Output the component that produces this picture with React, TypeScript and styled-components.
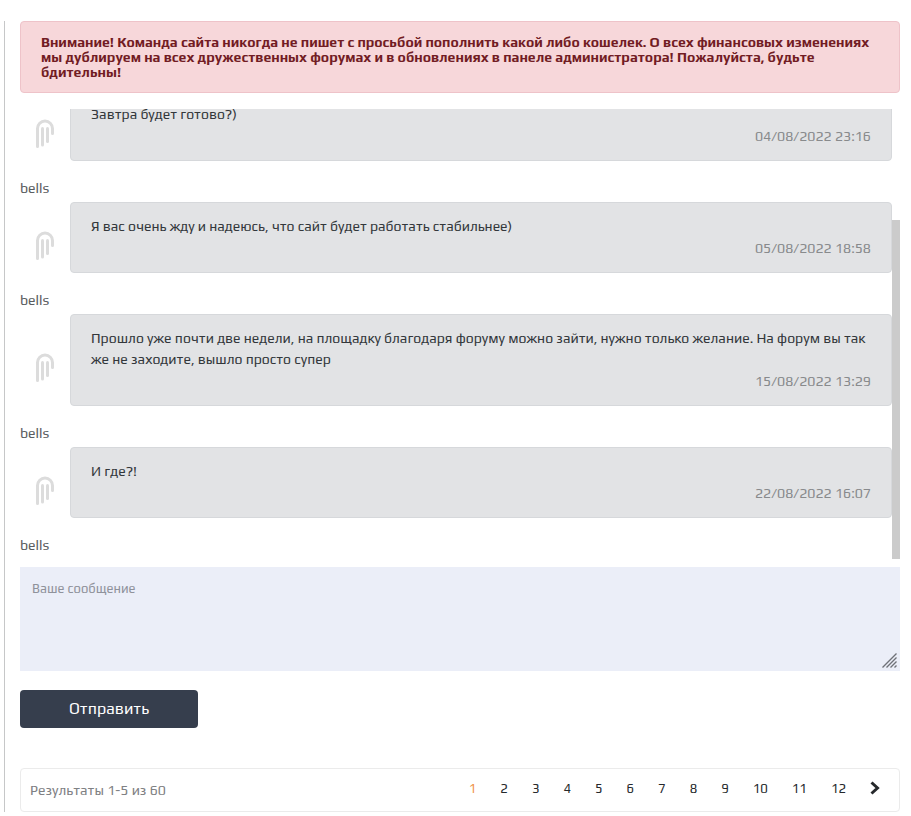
import React, { useEffect, useRef, useState } from "react";
import styled, { createGlobalStyle } from "styled-components";

const GlobalStyle = createGlobalStyle`
  *, *::before, *::after { box-sizing: border-box; }
  body {
    margin: 0;
    background: #fff;
    color: #33373b;
    font-family: "Play", Lato, "Noto Sans", sans-serif;
    font-size: 14px;
    line-height: 21px;
  }
  button, textarea { font-family: inherit; }
`;

const Page = styled.main`
  margin: 21px 11px 4px 4px;
  padding-left: 15px;
  border-left: 1px solid #c6c7c8;
`;

const Alert = styled.div`
  padding: 13px 20px 12px;
  border: 1px solid #eec3c9;
  border-radius: 4px;
  background: #f7d7da;
  color: #721c24;
  font-weight: 700;
  line-height: 15px;
`;

const Chat = styled.section`
  display: flex;
  height: 450px;
  margin-top: 16px;
`;

const Scroller = styled.div`
  flex: 1;
  min-width: 0;
  overflow-y: auto;
  scrollbar-width: none;
  &::-webkit-scrollbar { display: none; }
`;

const Track = styled.div`
  flex: none;
  width: 8px;
`;

const Thumb = styled.div`
  background: #cbcbcb;
`;

const MessageList = styled.ol`
  margin: 0;
  padding: 128px 0 0;
  list-style: none;
`;

const MessageItem = styled.li`
  display: grid;
  grid-template-columns: 50px minmax(0, 1fr);
`;

const Avatar = styled.div`
  display: flex;
  align-items: center;
  justify-content: center;
  padding-top: 16px;
`;

const Bubble = styled.div`
  padding: 13px 20px;
  border: 1px solid #d6d8db;
  border-radius: 4px;
  background: #e2e3e5;
`;

const MessageText = styled.p`
  margin: 0;
`;

const Time = styled.time`
  display: block;
  margin-top: 1px;
  color: #888a8c;
  text-align: right;
`;

const Author = styled.div`
  grid-column: 1 / -1;
  padding: 17px 0 3px;
  color: #5a5d60;
`;

const Form = styled.form`
  margin-top: 8px;
`;

const Field = styled.div`
  position: relative;
  display: flex;
`;

const MessageInput = styled.textarea`
  width: 100%;
  height: 104px;
  padding: 11px 12px;
  border: 0;
  border-radius: 0;
  background: #ebeef8;
  color: #33373b;
  font-size: 13px;
  line-height: 21px;
  resize: vertical;
  &::placeholder { color: #8f929b; opacity: 1; }
  &::-webkit-resizer { background: transparent; }
`;

const Grip = styled.svg`
  position: absolute;
  right: 3px;
  bottom: 3px;
  pointer-events: none;
`;

const SubmitButton = styled.button`
  display: block;
  width: 178px;
  height: 38px;
  margin-top: 19px;
  padding: 0;
  border: 0;
  border-radius: 4px;
  background: #363e4d;
  color: #fff;
  font-size: 16px;
  line-height: 24px;
  cursor: pointer;
`;

const Footer = styled.footer`
  display: flex;
  align-items: center;
  justify-content: space-between;
  height: 44px;
  margin-top: 40px;
  padding: 0 7px 0 9px;
  border: 1px solid #ebebeb;
  border-radius: 4px;
`;

const Summary = styled.span`
  color: #7f8184;
`;

const Pages = styled.nav`
  display: flex;
  align-items: center;
  padding-bottom: 4px;
`;

const PageLink = styled.a<{ $current?: boolean }>`
  display: flex;
  align-items: center;
  height: 21px;
  padding: 0 12px;
  color: ${(p) => (p.$current ? "#ef9448" : "#26292c")};
  font-size: 13px;
  text-decoration: none;
`;

const messages = [
  { text: "Завтра будет готово?)", time: "04/08/2022 23:16" },
  { text: "Я вас очень жду и надеюсь, что сайт будет работать стабильнее)", time: "05/08/2022 18:58" },
  {
    text: "Прошло уже почти две недели, на площадку благодаря форуму можно зайти, нужно только желание. На форум вы так же не заходите, вышло просто супер",
    time: "15/08/2022 13:29",
  },
  { text: "И где?!", time: "22/08/2022 16:07" },
];

const pageNumbers = Array.from({ length: 12 }, (_, i) => i + 1);

function PipesIcon() {
  return (
    <svg width="20" height="30" viewBox="0 0 20 30" fill="none" stroke="#dcdcdc" strokeWidth="3" strokeLinecap="round" aria-hidden="true">
      <path d="M2.5 27.5V9.5a7.5 7.5 0 0 1 15 0V14.5" />
      <path d="M7.5 26V9.5" />
      <path d="M12.5 22.5V9.5" />
    </svg>
  );
}

function Message({ text, time }: { text: string; time: string }) {
  return (
    <MessageItem>
      <Avatar>
        <PipesIcon />
      </Avatar>
      <Bubble>
        <MessageText>{text}</MessageText>
        <Time>{time}</Time>
      </Bubble>
      <Author>bells</Author>
    </MessageItem>
  );
}

function ChatHistory() {
  const scroller = useRef<HTMLDivElement>(null);
  const [thumb, setThumb] = useState({ height: 0, top: 0 });

  const update = () => {
    const el = scroller.current;
    if (!el) return;
    const ratio = el.clientHeight / el.scrollHeight;
    setThumb({ height: el.clientHeight * ratio, top: el.scrollTop * ratio });
  };

  useEffect(() => {
    const el = scroller.current;
    if (!el) return;
    el.scrollTop = el.scrollHeight;
    update();
    const observer = new ResizeObserver(update);
    observer.observe(el);
    return () => observer.disconnect();
  }, []);

  return (
    <Chat>
      <Scroller ref={scroller} onScroll={update}>
        <MessageList>
          {messages.map((m) => (
            <Message key={m.time} {...m} />
          ))}
        </MessageList>
      </Scroller>
      <Track>
        <Thumb style={{ height: thumb.height, marginTop: thumb.top }} />
      </Track>
    </Chat>
  );
}

export default function App() {
  return (
    <>
      <GlobalStyle />
      <Page>
        <Alert role="alert">
          Внимание! Команда сайта никогда не пишет с просьбой пополнить какой либо кошелек. О всех финансовых
          изменениях мы дублируем на всех дружественных форумах и в обновлениях в панеле администратора!
          Пожалуйста, будьте бдительны!
        </Alert>
        <ChatHistory />
        <Form onSubmit={(e) => e.preventDefault()}>
          <Field>
            <MessageInput placeholder="Ваше сообщение" aria-label="Ваше сообщение" />
            <Grip width="15" height="15" viewBox="0 0 15 15" stroke="#6f7178" strokeWidth="1.4" aria-hidden="true">
              <path d="M0.5 14.5L14.5 0.5M4.5 14.5L14.5 4.5M8.5 14.5L14.5 8.5M12.5 14.5L14.5 12.5" />
            </Grip>
          </Field>
          <SubmitButton type="submit">Отправить</SubmitButton>
        </Form>
        <Footer>
          <Summary>Результаты 1-5 из 60</Summary>
          <Pages aria-label="Страницы">
            {pageNumbers.map((n) => (
              <PageLink key={n} href={`#page-${n}`} $current={n === 1} aria-current={n === 1 ? "page" : undefined}>
                {n}
              </PageLink>
            ))}
            <PageLink href="#next" aria-label="Следующая страница">
              <svg width="10" height="14" viewBox="0 0 10 14" fill="none" stroke="currentColor" strokeWidth="3" aria-hidden="true">
                <path d="M1.5 1.5L7.5 7L1.5 12.5" />
              </svg>
            </PageLink>
          </Pages>
        </Footer>
      </Page>
    </>
  );
}
